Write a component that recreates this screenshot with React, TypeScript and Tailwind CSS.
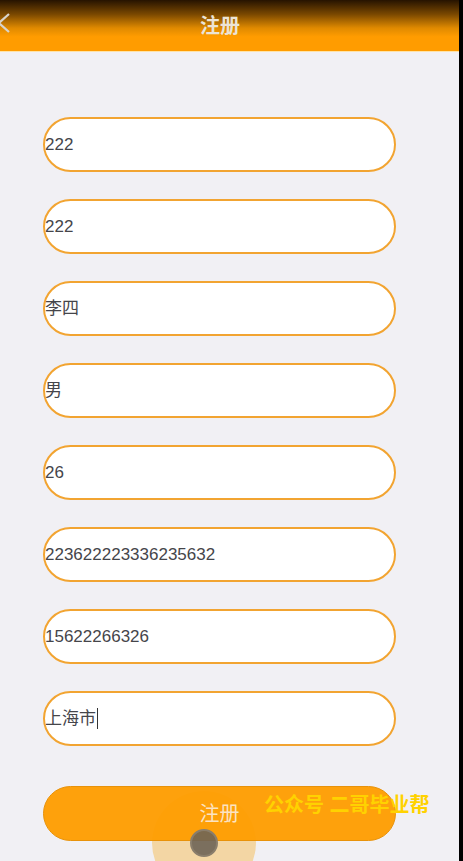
import React from "react";

const fields = [
  "222",
  "222",
  "李四",
  "男",
  "26",
  "223622223336235632",
  "15622266326",
];

const font = {
  fontFamily: '"Liberation Sans", "Noto Sans CJK SC", sans-serif',
};

export default function App() {
  return (
    <div className="flex h-[861px] w-[463px] overflow-hidden bg-black" style={font}>
      <div className="relative flex h-full w-[459px] flex-col bg-[#f1f0f4]">
        {/* Header */}
        <div className="relative flex h-[51px] items-center bg-[linear-gradient(to_bottom,#261300_0%,#7a4800_28%,#e08a00_55%,#ff9c00_72%,#ff9c00_100%)]">
          <svg className="absolute left-[-6px] top-[12px]" width="18" height="22" viewBox="0 0 18 22">
            <path d="M15 2 L5 11 L15 20" fill="none" stroke="#d8d4cc" strokeWidth="2.2" />
          </svg>
          <div className="w-[440px] text-center text-[20px] font-bold text-[#ece4d6]">注册</div>
        </div>
        <div className="h-px bg-[#ffe3a8]" />

        {/* touch indicator (behind button) */}
        <div className="absolute left-[152px] top-[791px] h-[104px] w-[104px] rounded-full bg-[#f3d6a4]" />

        {/* Form */}
        <div className="relative flex flex-col gap-[27px] pl-[43px] pt-[65px]">
          {fields.map((v, i) => (
            <div
              key={i}
              className="flex h-[55px] w-[353px] items-center rounded-full border-2 border-[#f2a431] bg-white text-[17px] text-[#45454a]"
            >
              {v}
            </div>
          ))}
          <div className="flex h-[55px] w-[353px] items-center rounded-full border-2 border-[#f2a431] bg-white text-[17px] text-[#45454a]">
            上海市
            <span className="ml-px inline-block h-[21px] w-px bg-[#333]" />
          </div>
          <div className="mt-[13px] flex h-[55px] w-[353px] items-center justify-center rounded-full border border-[#e8920a] bg-[#ff9d00]/95 text-[20px] text-[#fbe3c2]">
            注册
          </div>
        </div>

        <div className="absolute left-[190px] top-[829px] h-[28px] w-[28px] rounded-full border-2 border-[#8a7e6c] bg-[#6e6456]/90" />

        {/* watermark */}
        <div className="absolute left-[264px] top-[790px] text-[20px] font-bold text-[#ffd200]">
          公众号 二哥毕业帮
        </div>
      </div>
      <div className="flex-1 bg-black" />
    </div>
  );
}
